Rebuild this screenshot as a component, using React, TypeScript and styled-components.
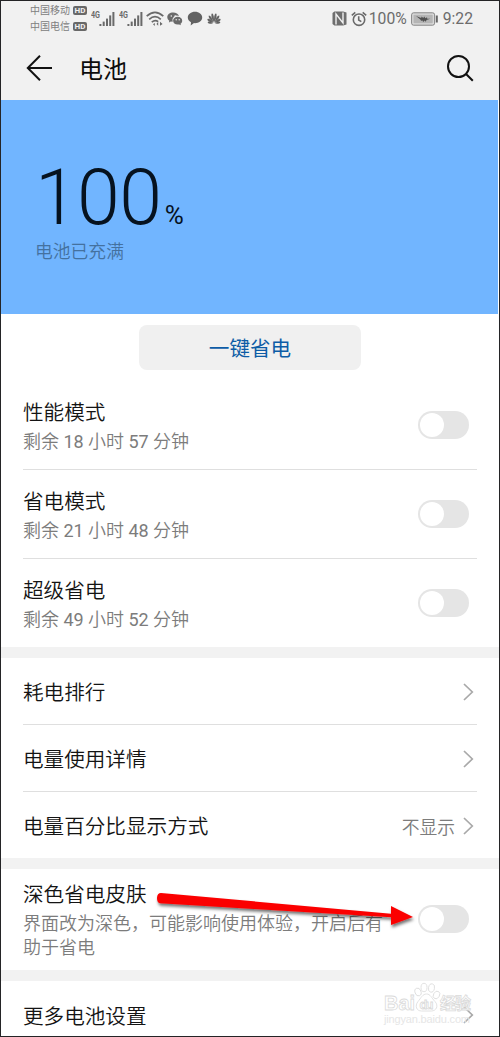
import React from "react";
import styled, { createGlobalStyle } from "styled-components";

const Global = createGlobalStyle`
  * { box-sizing: border-box; }
  body { margin: 0; background: #fff; font-family: Roboto, "Noto Sans CJK SC", sans-serif; }
`;

const Screen = styled.div`
  position: relative;
  width: 500px;
  height: 1037px;
  border: 1px solid #242426;
  background: #fff;
  overflow: hidden;
  display: flex;
  flex-direction: column;
`;

const StatusBar = styled.div`
  height: 35px;
  flex: none;
  display: flex;
  align-items: center;
  padding: 0 26px 0 29px;
  background: #f1f1f1;
  color: #6c6c6c;
`;

const Carriers = styled.div`
  display: flex;
  flex-direction: column;
  width: 59px;
`;

const Carrier = styled.div`
  display: flex;
  align-items: center;
  justify-content: space-between;
  height: 15.3px;
  width: 57px;
  font-size: 10px;
  line-height: 15px;
  color: #808080;
  white-space: nowrap;
`;

const Hd = styled.span`
  width: 14px;
  height: 9px;
  border-radius: 2px;
  background: #686868;
  color: #f1f1f1;
  font-size: 8px;
  font-weight: 700;
  line-height: 9.5px;
  text-align: center;
`;

const StatusText = styled.span<{ $left: number }>`
  margin-left: ${(p) => p.$left}px;
  font-size: 15.7px;
  line-height: 20px;
  color: #6c6c6c;
`;

const StatusIcon = styled.svg<{ $left: number }>`
  flex: none;
  margin-left: ${(p) => p.$left}px;
  display: block;
`;

const Spacer = styled.div`
  flex: 1;
`;

const TitleBar = styled.div`
  height: 64px;
  flex: none;
  display: flex;
  align-items: center;
  padding: 0 25px 0 25px;
  background: #f1f1f1;
`;

const Title = styled.h1`
  flex: 1;
  margin: 3px 0 0 26px;
  font-size: 24px;
  line-height: 34px;
  font-weight: 400;
  color: #0c0c0c;
`;

const Hero = styled.div`
  height: 214px;
  flex: none;
  margin-right: 1px;
  padding: 54px 0 0 34px;
  background: #71b5ff;
`;

const Level = styled.div`
  display: flex;
  align-items: baseline;
  height: 85px;
  font-size: 77px;
  font-weight: 300;
  line-height: 88px;
  letter-spacing: -0.6px;
  color: #06121f;
`;

const Percent = styled.span`
  font-size: 26px;
  font-weight: 400;
  letter-spacing: 0;
  margin-left: 3.5px;
`;

const Charge = styled.div`
  font-size: 17.8px;
  line-height: 26px;
  font-weight: 350;
  color: #44719f;
`;

const ButtonArea = styled.div`
  height: 67px;
  flex: none;
  padding-top: 11px;
  display: flex;
  justify-content: center;
`;

const SaveButton = styled.button`
  width: 222px;
  height: 45px;
  padding: 3px 0 0;
  border: 0;
  border-radius: 8px;
  background: #f0f0f0;
  font: 400 20.6px/42px Roboto, "Noto Sans CJK SC", sans-serif;
  color: #0d5ca6;
`;

const Group = styled.section`
  flex: none;
  padding: 0 22px 0 22px;
`;

const Band = styled.div<{ $h: number }>`
  height: ${(p) => p.$h}px;
  flex: none;
  background: #f2f2f2;
`;

const Row = styled.div<{ $h: number; $line?: boolean }>`
  height: ${(p) => p.$h}px;
  display: flex;
  align-items: center;
  justify-content: space-between;
  border-bottom: ${(p) => (p.$line ? "1px solid #dfdfdf" : "0")};
`;

const Texts = styled.div`
  width: 372px;
  padding-top: 1px;
`;

const Label = styled.div<{ $single?: boolean }>`
  padding-top: ${(p) => (p.$single ? 4 : 0)}px;
  font-size: 20.6px;
  line-height: 30px;
  font-weight: 350;
  color: #141414;
  white-space: nowrap;
`;

const Sub = styled.div`
  font-size: 18px;
  line-height: 24px;
  padding-top: 2px;
  font-weight: 350;
  color: #7c7c7c;
  white-space: pre;
`;

const Digits = styled.span`
  font-weight: 400;
`;

const Toggle = styled.div`
  width: 51px;
  height: 28px;
  margin: 0 8px 1px 0;
  padding: 2px;
  border-radius: 14px;
  background: #e5e5e5;
  flex: none;
`;

const Knob = styled.div`
  width: 24px;
  height: 24px;
  border-radius: 50%;
  background: #fff;
`;

const Value = styled.div`
  display: flex;
  align-items: center;
  gap: 8px;
  padding: 1px 3px 0 0;
  font-size: 17.8px;
  font-weight: 350;
  color: #7c7c7c;
`;

const Overlay = styled.svg`
  position: absolute;
  left: -1px;
  top: -1px;
  pointer-events: none;
`;

const Chevron = () => (
  <svg width="11" height="20" viewBox="0 0 11 20" fill="none" stroke="#a9a9a9" strokeWidth="1.7">
    <path d="M1 2 9.3 10 1 18" />
  </svg>
);

const Signal = ({ left }: { left: number }) => (
  <StatusIcon $left={left} width="24" height="16" viewBox="0 0 24 16">
    <text x="0" y="6.5" fontSize="8.2" fontWeight="700" fontFamily="Roboto" fill="#6a6a6a" textLength="9" lengthAdjust="spacingAndGlyphs">4G</text>
    <g fill="#6a6a6a">
      <rect x="8.4" y="13" width="2" height="2" />
      <rect x="11.7" y="10.6" width="2" height="4.4" />
      <rect x="15" y="7.6" width="2" height="7.4" />
      <rect x="18.2" y="4.4" width="2" height="10.6" />
      <rect x="21.4" y="1" width="2" height="14" />
    </g>
  </StatusIcon>
);

const PETALS = [
  { angle: -80, length: 6.5 },
  { angle: -56, length: 8 },
  { angle: -33, length: 9.5 },
  { angle: -11, length: 10.5 },
  { angle: 11, length: 10.5 },
  { angle: 33, length: 9.5 },
  { angle: 56, length: 8 },
  { angle: 80, length: 6.5 },
];

const MODES = [
  { label: "性能模式", hours: 18, minutes: 57 },
  { label: "省电模式", hours: 21, minutes: 48 },
  { label: "超级省电", hours: 49, minutes: 52 },
];

export default function App() {
  return (
    <Screen>
      <Global />
      <StatusBar>
        <Carriers>
          <Carrier>中国移动<Hd>HD</Hd></Carrier>
          <Carrier>中国电信<Hd>HD</Hd></Carrier>
        </Carriers>
        <Signal left={2} />
        <Signal left={4} />
        <StatusIcon $left={3} width="18" height="16" viewBox="0 0 18 16" fill="none" stroke="#6a6a6a" strokeWidth="1.7">
          <path d="M.7 5.2Q9-2.6 17.3 5.2M3.2 8.4Q9 3 14.8 8.4M5.8 11.2Q9 8.2 12.2 10.6" />
          <path d="m7 13.3 1.8 1.6V12z" fill="#6a6a6a" stroke="none" />
          <path d="M12.2 10.8v4l-1.7-1.9zM14 10.8v4l2.6-1.9z" fill="#6a6a6a" stroke="none" />
        </StatusIcon>
        <StatusIcon $left={3} width="16" height="14" viewBox="0 0 16 14" fill="#6a6a6a">
          <path d="M6.2.5C2.8.5.3 2.6.3 5.2c0 1.5.8 2.7 2 3.6l-.4 1.8 2-1.1 1.8.3A4.6 4.6 0 0 1 11.9 4C11.3 2 9 .5 6.2.5Z" />
          <path d="M10.7 4.8c-2.7 0-4.6 1.7-4.6 3.9s1.9 3.9 4.6 3.9l1.5-.2 1.7.9-.4-1.5c1.1-.8 1.7-1.8 1.7-3.1 0-2.2-1.9-3.9-4.5-3.9Z" />
          <g fill="#f1f1f1">
            <circle cx="4.3" cy="4" r=".8" /><circle cx="8.2" cy="4" r=".8" />
            <circle cx="9.2" cy="7.7" r=".7" /><circle cx="12.2" cy="7.7" r=".7" />
          </g>
        </StatusIcon>
        <StatusIcon $left={4} width="16" height="15" viewBox="0 0 16 15" fill="#626262">
          <path d="M8 .8c4 0 7.2 2.5 7.2 5.8S12 12.2 8 12.2l-1-.1-3.3 2.3.3-3.1C2 10.3.8 8.7.8 6.6.8 3.3 4 .8 8 .8Z" />
        </StatusIcon>
        <StatusIcon $left={3} width="16" height="14" viewBox="0 0 16 14" fill="#626262">
          {PETALS.map(({ angle, length }) => (
            <path
              key={angle}
              d={`M8 10.5Q5.7 ${10.5 - length * 0.75} 8 ${11.5 - length}Q10.3 ${10.5 - length * 0.75} 8 10.5Z`}
              transform={`rotate(${angle} 8 11.5)`}
            />
          ))}
        </StatusIcon>
        <Spacer />
        <StatusIcon $left={0} width="15" height="15" viewBox="0 0 15 15">
          <path d="M2.4.5h8.800l3.300 1v12l-3.300 1H2.400L.5 13V2z" fill="#6e6e6e" />
          <path d="M4 13.500V3l7 9V1.500" fill="none" stroke="#f1f1f1" strokeWidth="1.400" />
        </StatusIcon>
        <StatusIcon $left={4} width="16" height="16" viewBox="0 0 16 16" fill="none" stroke="#6a6a6a" strokeWidth="1.6">
          <circle cx="8" cy="8.7" r="5.7" />
          <path d="M.8 4.3 4.3 1.3M15.2 4.3 11.7 1.3M7.7 5.3v3.700l2.600 1.600" />
        </StatusIcon>
        <StatusText $left={2}>100%</StatusText>
        <StatusIcon $left={4} width="27" height="14" viewBox="0 0 27 14">
          <rect x=".6" y=".8" width="23" height="12.4" rx="2" fill="#d8d8d8" stroke="#858585" />
          <rect x="2.5" y="2.7" width="19.2" height="8.6" rx=".8" fill="#b5b5b5" />
          <path d="m5 4 5.200 2.100.3-1.600 1.800 1.600.9-1.700 1.300 1.900 1.500-1 .3 1.400h3L15.500 8l-.7 1.700-1.300-1.300-1.200 1.500-1.100-1.700-1 .9-.9-1.600z" fill="#505050" />
          <rect x="24.8" y="3.5" width="2" height="7" fill="#666" />
        </StatusIcon>
        <StatusText $left={5}>9:22</StatusText>
      </StatusBar>
      <TitleBar>
        <svg width="27" height="28" viewBox="0 0 27 28" fill="none" stroke="#111" strokeWidth="2">
          <path d="M14 1.8 1.8 14 14 26.200M2 14h24" />
        </svg>
        <Title>电池</Title>
        <svg width="28" height="28" viewBox="0 0 28 28" fill="none" stroke="#111" strokeWidth="2">
          <circle cx="12.5" cy="12.5" r="10.5" />
          <path d="m19.8 19.8 7 7" />
        </svg>
      </TitleBar>
      <Hero>
        <Level>100<Percent>%</Percent></Level>
        <Charge>电池已充满</Charge>
      </Hero>
      <ButtonArea><SaveButton>一键省电</SaveButton></ButtonArea>
      <Group>
        {MODES.map(({ label, hours, minutes }, i) => (
          <Row key={label} $h={i === 2 ? 88 : 89} $line={i < 2}>
            <Texts>
              <Label>{label}</Label>
              <Sub>剩余 <Digits>{hours}</Digits> 小时 <Digits>{minutes}</Digits> 分钟</Sub>
            </Texts>
            <Toggle><Knob /></Toggle>
          </Row>
        ))}
      </Group>
      <Band $h={11} />
      <Group>
        <Row $h={67} $line><Label $single>耗电排行</Label><Value><Chevron /></Value></Row>
        <Row $h={67} $line><Label $single>电量使用详情</Label><Value><Chevron /></Value></Row>
        <Row $h={66}><Label $single>电量百分比显示方式</Label><Value>不显示<Chevron /></Value></Row>
      </Group>
      <Band $h={11} />
      <Group>
        <Row $h={101}>
          <Texts>
            <Label>深色省电皮肤</Label>
            <Sub>{"界面改为深色，可能影响使用体验，开启后有\n助于省电"}</Sub>
          </Texts>
          <Toggle><Knob /></Toggle>
        </Row>
      </Group>
      <Band $h={11} />
      <Group>
        <Row $h={67}><Label $single>更多电池设置</Label><Value><Chevron /></Value></Row>
      </Group>
      <Overlay width="500" height="1037" viewBox="0 0 500 1037">
        <defs>
          <filter id="shade" x="-10%" y="-30%" width="120%" height="200%">
            <feDropShadow dx="1" dy="2.5" stdDeviation="1.8" floodColor="#000" floodOpacity=".55" />
          </filter>
        </defs>
        <path
          d="M161 893 391 913.700V906L413 917 391 925V917.300L160 903.300Q157 902.800 157 898 157.200 893 161 893Z"
          fill="#fb0303"
          filter="url(#shade)"
        />
        <g fill="#fff" stroke="#dadada" strokeWidth=".8" fontFamily="Liberation Sans">
          <text x="384" y="1010" fontSize="21" fontWeight="700" textLength="31" lengthAdjust="spacingAndGlyphs">Bai</text>
          <ellipse cx="418" cy="992" rx="3" ry="4" transform="rotate(-20 418 992)" />
          <ellipse cx="424" cy="987.5" rx="3" ry="4.2" />
          <ellipse cx="431.5" cy="988" rx="3" ry="4.2" transform="rotate(12 431.5 988)" />
          <ellipse cx="436.5" cy="995" rx="3" ry="4" transform="rotate(30 436.5 995)" />
          <path d="M426.500 994c4 0 5 4 8.500 7.500 4 4.500 1 9.500-3.500 9.500h-10c-5 0-7-5-3.500-9.500 3-3.500 4.500-7.500 8.500-7.500Z" />
          <text x="419.5" y="1008.5" fontSize="13" fontWeight="700" textLength="14">du</text>
          <text x="440" y="1009" fontSize="16" fontWeight="700" fontFamily="Noto Sans CJK SC" textLength="31">经验</text>
          <text x="384" y="1022.5" fontSize="11" fill="#e6e6e6" stroke="none" textLength="86">jingyan.baidu.com</text>
        </g>
      </Overlay>
    </Screen>
  );
}
